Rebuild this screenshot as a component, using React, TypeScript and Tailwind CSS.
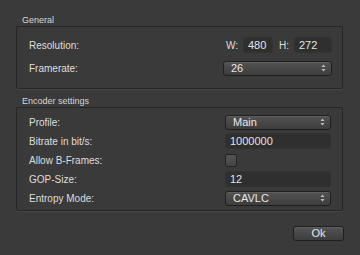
import React from "react";

function Arrows() {
  return (
    <svg width="5" height="8" viewBox="0 0 5 8" className="shrink-0">
      <path d="M2.5 0.5 L4.5 3 L0.5 3 Z" fill="#bdbdbd" />
      <path d="M2.5 7.5 L4.5 5 L0.5 5 Z" fill="#bdbdbd" />
    </svg>
  );
}

function Combo({ value, className = "" }: { value: string; className?: string }) {
  return (
    <div
      className={`flex h-[15px] items-center justify-between rounded-[3px] border border-[#1f1f1f] bg-gradient-to-b from-[#535353] to-[#3d3d3d] pl-[7px] pr-[5px] text-[11px] text-[#e8e8e8] shadow-[inset_0_1px_0_#5e5e5e] ${className}`}
    >
      <span>{value}</span>
      <Arrows />
    </div>
  );
}

function Field({ value, className = "" }: { value: string; className?: string }) {
  return (
    <div
      className={`flex h-[16px] items-center rounded-[3px] border border-[#333] bg-[#2f2f2f] px-[4px] text-[11px] text-[#e4e4e4] ${className}`}
    >
      {value}
    </div>
  );
}

function Row({ label, children }: { label: string; children: React.ReactNode }) {
  return (
    <div className="flex h-[16px] items-center justify-between">
      <span className="text-[10px] text-[#dedede]">{label}</span>
      {children}
    </div>
  );
}

export default function App() {
  return (
    <div
      className="h-[255px] w-[360px] overflow-hidden bg-[#3a3a3a] pl-[16px] pr-[16px] pt-[14px]"
      style={{ fontFamily: '"Liberation Sans", Arial, sans-serif' }}
    >
      <div className="pl-[6px] text-[9px] leading-[12px] text-[#d6d6d6]">General</div>
      <div className="mr-[1px] rounded-[2px] border border-[#262626] pb-[12px] pl-[12px] pr-[10px] pt-[10px] shadow-[0_1px_0_#474747]">
        <div className="flex flex-col gap-[7px]">
          <Row label="Resolution:">
            <div className="flex items-center">
              <span className="mr-[5px] text-[10px] text-[#dedede]">W:</span>
              <Field value="480" className="w-[30px]" />
              <span className="ml-[6px] mr-[5px] text-[10px] text-[#dedede]">H:</span>
              <Field value="272" className="w-[38px]" />
            </div>
          </Row>
          <Row label="Framerate:">
            <Combo value="26" className="w-[109px]" />
          </Row>
        </div>
      </div>

      <div className="mt-[6px] pl-[6px] text-[9px] leading-[12px] text-[#d6d6d6]">Encoder settings</div>
      <div className="mr-[1px] rounded-[2px] border border-[#262626] pb-[4px] pl-[12px] pr-[11px] pt-[6px] shadow-[0_1px_0_#474747]">
        <div className="flex flex-col gap-[3px]">
          <Row label="Profile:">
            <Combo value="Main" className="w-[106px]" />
          </Row>
          <Row label="Bitrate in bit/s:">
            <Field value="1000000" className="w-[106px]" />
          </Row>
          <Row label="Allow B-Frames:">
            <div className="flex w-[106px]">
              <div className="h-[13px] w-[12px] rounded-[2px] border border-[#222] bg-gradient-to-b from-[#555] to-[#444]" />
            </div>
          </Row>
          <Row label="GOP-Size:">
            <Field value="12" className="w-[106px]" />
          </Row>
          <Row label="Entropy Mode:">
            <Combo value="CAVLC" className="w-[106px]" />
          </Row>
        </div>
      </div>

      <div className="mt-[15px] flex justify-end">
        <button className="h-[15px] w-[51px] rounded-[3px] border border-[#1f1f1f] bg-gradient-to-b from-[#545454] to-[#3d3d3d] text-[11px] leading-none text-[#e8e8e8] shadow-[inset_0_1px_0_#5e5e5e]">
          Ok
        </button>
      </div>
    </div>
  );
}
